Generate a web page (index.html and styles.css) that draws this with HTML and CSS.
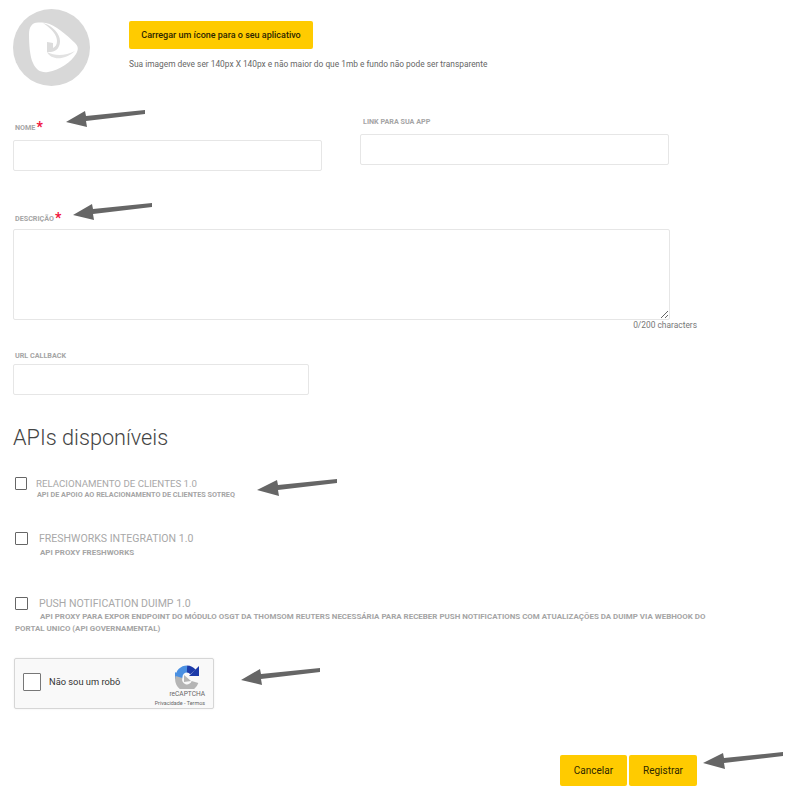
FILE: index.html
```html
<!DOCTYPE html>
<html lang="pt-br">
<head>
    <meta charset="UTF-8">
    <meta name="viewport" content="width=device-width, initial-scale=1.0">
    <title>Registrar aplicativo</title>
    <link rel="stylesheet" href="styles.css">
</head>
<body>
    <main class="page">
        <section class="upload">
            <svg class="logo" viewBox="0 0 77 77" width="77" height="77">
                <circle cx="38.5" cy="38.5" r="38.5" fill="#d8d8d8"/>
                <path d="M25 13.500 C19 13.500 16 18 16 25 C16 36 17 48 20 54 C23 61 28 64 35 63 C47 61 58 53 63 45 C66 40 65 37 62 34 C54 26 42 16 33 14 C30 13.500 28 13.500 25 13.500 Z" fill="#fff"/>
                <path d="M30 14 C39 20 44 26 44 32 C44 36 42 38 40 39 L40 34 L34 33 L34 43 L38 43 C44 42 47 38 47 32 C47 25 40 17 30 14 Z" fill="#dcdcdc"/>
                <path d="M34 43 C38 51 51 52 62 42 C52 47 42 47 34 43 Z" fill="#e2e2e2"/>
            </svg>
            <div class="upload-info">
                <button class="btn btn-upload" type="button">Carregar um ícone para o seu aplicativo</button>
                <p class="hint">Sua imagem deve ser 140px X 140px e não maior do que 1mb e fundo não pode ser transparente</p>
            </div>
        </section>

        <section class="row">
            <div class="field field-name">
                <label class="label">NOME<span class="req">*</span></label>
                <input class="input" type="text">
            </div>
            <div class="field field-link">
                <label class="label">LINK PARA SUA APP</label>
                <input class="input" type="text">
            </div>
        </section>

        <section class="field field-desc">
            <label class="label">DESCRIÇÃO<span class="req">*</span></label>
            <textarea class="textarea"></textarea>
            <div class="counter">0/200 characters</div>
        </section>

        <section class="field field-url">
            <label class="label">URL CALLBACK</label>
            <input class="input" type="text">
        </section>

        <h2 class="title">APIs disponíveis</h2>

        <div class="api api-first">
            <div class="api-head">
                <span class="check"></span>
                <span class="api-name">RELACIONAMENTO DE CLIENTES 1.0</span>
            </div>
            <p class="api-desc">API DE APOIO AO RELACIONAMENTO DE CLIENTES SOTREQ</p>
        </div>
        <div class="api api-second">
            <div class="api-head">
                <span class="check"></span>
                <span class="api-name">FRESHWORKS INTEGRATION 1.0</span>
            </div>
            <p class="api-desc">API PROXY FRESHWORKS</p>
        </div>
        <div class="api api-third">
            <div class="api-head">
                <span class="check"></span>
                <span class="api-name">PUSH NOTIFICATION DUIMP 1.0</span>
            </div>
            <p class="api-desc">API PROXY PARA EXPOR ENDPOINT DO MÓDULO OSGT DA THOMSOM REUTERS NECESSÁRIA PARA RECEBER PUSH NOTIFICATIONS COM ATUALIZAÇÕES DA DUIMP VIA WEBHOOK DO PORTAL UNICO (API GOVERNAMENTAL)</p>
        </div>

        <div class="captcha">
            <span class="captcha-box"></span>
            <span class="captcha-text">Não sou um robô</span>
            <div class="captcha-brand">
                <svg class="captcha-logo" viewBox="0 0 24 24" width="24" height="24">
                    <path d="M4 12 A8 8 0 0 1 12 4" fill="none" stroke="#4a90e2" stroke-width="7"/>
                    <path d="M0 7 L8 13 L0 14 Z" fill="#4a90e2"/>
                    <path d="M12 4 A8 8 0 0 1 18 7" fill="none" stroke="#1c3aa9" stroke-width="7"/>
                    <path d="M24 1 L24 11 L14 11 Z" fill="#1c3aa9"/>
                    <path d="M4 12 A8 8 0 0 0 20 17" fill="none" stroke="#b5b5b5" stroke-width="7"/>
                    <path d="M9 10 L16 16 L9 17 Z" fill="#b5b5b5"/>
                </svg>
                <span class="captcha-name">reCAPTCHA</span>
                <span class="captcha-links">Privacidade - Termos</span>
            </div>
        </div>

        <div class="actions">
            <button class="btn btn-action" type="button">Cancelar</button>
            <button class="btn btn-action btn-wide" type="button">Registrar</button>
        </div>
    </main>

    <!-- setas de anotacao por cima da tela -->
    <svg class="arrow" style="left:65px;top:108px" width="82" height="20" viewBox="0 0 82 20"><path d="M80 2 L21 8 L20 3 L1 14 L22 19 L21 13 L80 6 Z"/></svg>
    <svg class="arrow" style="left:72px;top:201px" width="82" height="20" viewBox="0 0 82 20"><path d="M80 2 L21 8 L20 3 L1 14 L22 19 L21 13 L80 6 Z"/></svg>
    <svg class="arrow" style="left:256px;top:477px" width="82" height="20" viewBox="0 0 82 20"><path d="M81 2 L22 8 L21 3 L1 13 L23 19 L22 13 L81 6 Z"/></svg>
    <svg class="arrow" style="left:240px;top:666px" width="82" height="20" viewBox="0 0 82 20"><path d="M80 2 L21 8 L20 3 L1 14 L22 19 L21 13 L80 6 Z"/></svg>
    <svg class="arrow" style="left:702px;top:750px" width="82" height="20" viewBox="0 0 82 20"><path d="M81 2 L22 8 L21 3 L1 13 L23 19 L22 13 L81 6 Z"/></svg>
</body>
</html>
```

FILE: styles.css
```css
body {
    background: #fff;
    color: #333;
    font-family: Roboto, "Liberation Sans", sans-serif;
    margin: 0;
    padding: 0;
}

.page {
    width: 791px;
    height: 799px;
    padding: 9px 0 0 13px;
    box-sizing: border-box;
    overflow: hidden;
}

.upload {
    display: flex;
    height: 77px;
}

.logo {
    flex: none;
}

.upload-info {
    margin-left: 39px;
    padding-top: 12px;
}

.btn {
    background: #ffcb00;
    border: 0;
    border-radius: 2px;
    color: #2d2600;
    font-family: inherit;
    padding: 0;
}

.btn-upload {
    display: block;
    width: 184px;
    height: 28px;
    font-size: 9px;
    font-weight: 500;
}

.hint {
    color: #666;
    font-size: 8.35px;
    line-height: 12px;
    margin: 9px 0 0;
    white-space: nowrap;
}

.row {
    display: flex;
    align-items: flex-end;
    margin-top: 36px;
    height: 49px;
}

.label {
    display: block;
    color: #a5a5a5;
    font-size: 7.2px;
    font-weight: 700;
    line-height: 10px;
    padding-left: 2px;
}

.req {
    color: #f0123c;
    font-size: 14px;
    line-height: 0;
    margin-left: 1px;
    vertical-align: -2px;
}

.input {
    display: block;
    box-sizing: border-box;
    background: #fff;
    border: 1px solid #e6e6e6;
    border-radius: 2px;
    height: 31px;
    padding: 0;
    margin: 0;
}

.field-name {
    width: 309px;
}

.field-name .label {
    margin-bottom: 7px;
}

.field-name .input {
    width: 309px;
}

.field-link {
    width: 309px;
    margin: 0 0 6px 38px;
}

.field-link .label {
    margin-bottom: 7px;
    padding-left: 3px;
}

.field-link .input {
    width: 309px;
}

.field-desc {
    width: 684px;
    margin-top: 43px;
}

.field-desc .label {
    margin-bottom: 5px;
}

.textarea {
    display: block;
    box-sizing: border-box;
    width: 657px;
    height: 91px;
    border: 1px solid #e6e6e6;
    border-radius: 2px;
    padding: 0;
    margin: 0;
}

.counter {
    color: #777;
    font-size: 8.4px;
    line-height: 11px;
    text-align: right;
}

.field-url {
    margin-top: 20px;
}

.field-url .label {
    margin-bottom: 3px;
}

.field-url .input {
    width: 296px;
}

.title {
    color: #444;
    font-size: 21.7px;
    font-weight: 300;
    line-height: 26px;
    margin: 30px 0 0;
}

.api {
    margin-left: 2px;
    width: 695px;
}

.api-head {
    display: flex;
    align-items: center;
}

.check {
    flex: none;
    box-sizing: border-box;
    width: 12px;
    height: 13px;
    background: #fff;
    border: 1px solid #666;
    border-radius: 1px;
}

.api-name {
    color: #a8a8a8;
    font-size: 10.55px;
    line-height: 12px;
    margin-left: 11px;
}

.api-desc {
    color: #a5a5a5;
    font-size: 7.95px;
    font-weight: 700;
    line-height: 13px;
    margin: 0;
    text-indent: 25px;
}

.api-first {
    margin-top: 26px;
}

.api-first .api-name {
    font-size: 9.7px;
    margin-left: 9px;
}

.api-first .api-desc {
    font-size: 7.25px;
    text-indent: 22px;
    line-height: 11px;
    margin-top: -1px;
}

.api-second {
    margin-top: 32px;
}

.api-second .check,
.api-third .check {
    width: 13px;
}

.api-second .api-desc {
    margin-top: 1px;
}

.api-third {
    margin-top: 38px;
}

.api-third .api-desc {
    margin-top: 1px;
    line-height: 12px;
}

.captcha {
    display: flex;
    align-items: center;
    box-sizing: border-box;
    width: 200px;
    height: 51px;
    margin: 23px 0 0 1px;
    background: #f9f9f9;
    border: 1px solid #d6d6d6;
    border-radius: 2px;
    box-shadow: 0 0 2px rgba(0, 0, 0, 0.08);
}

.captcha-box {
    flex: none;
    box-sizing: border-box;
    width: 18px;
    height: 18px;
    margin: 0 0 4px 8px;
    background: #fff;
    border: 1px solid #777;
    border-radius: 1px;
}

.captcha-text {
    color: #333;
    font-size: 9.3px;
    margin: 0 0 4px 8px;
}

.captcha-brand {
    display: flex;
    flex-direction: column;
    align-items: flex-end;
    margin: 5px 8px 0 auto;
}

.captcha-logo {
    margin-right: 6px;
}

.captcha-name {
    color: #666;
    font-size: 6.6px;
    line-height: 9px;
    margin-top: 1px;
}

.captcha-links {
    color: #666;
    font-size: 5.4px;
    line-height: 9px;
    white-space: nowrap;
}

.actions {
    display: flex;
    gap: 2px;
    margin: 46px 0 0 547px;
}

.btn-action {
    width: 67px;
    height: 31px;
    font-size: 10px;
}

.btn-wide {
    width: 68px;
}

.arrow {
    position: absolute;
    fill: #666;
}
```
